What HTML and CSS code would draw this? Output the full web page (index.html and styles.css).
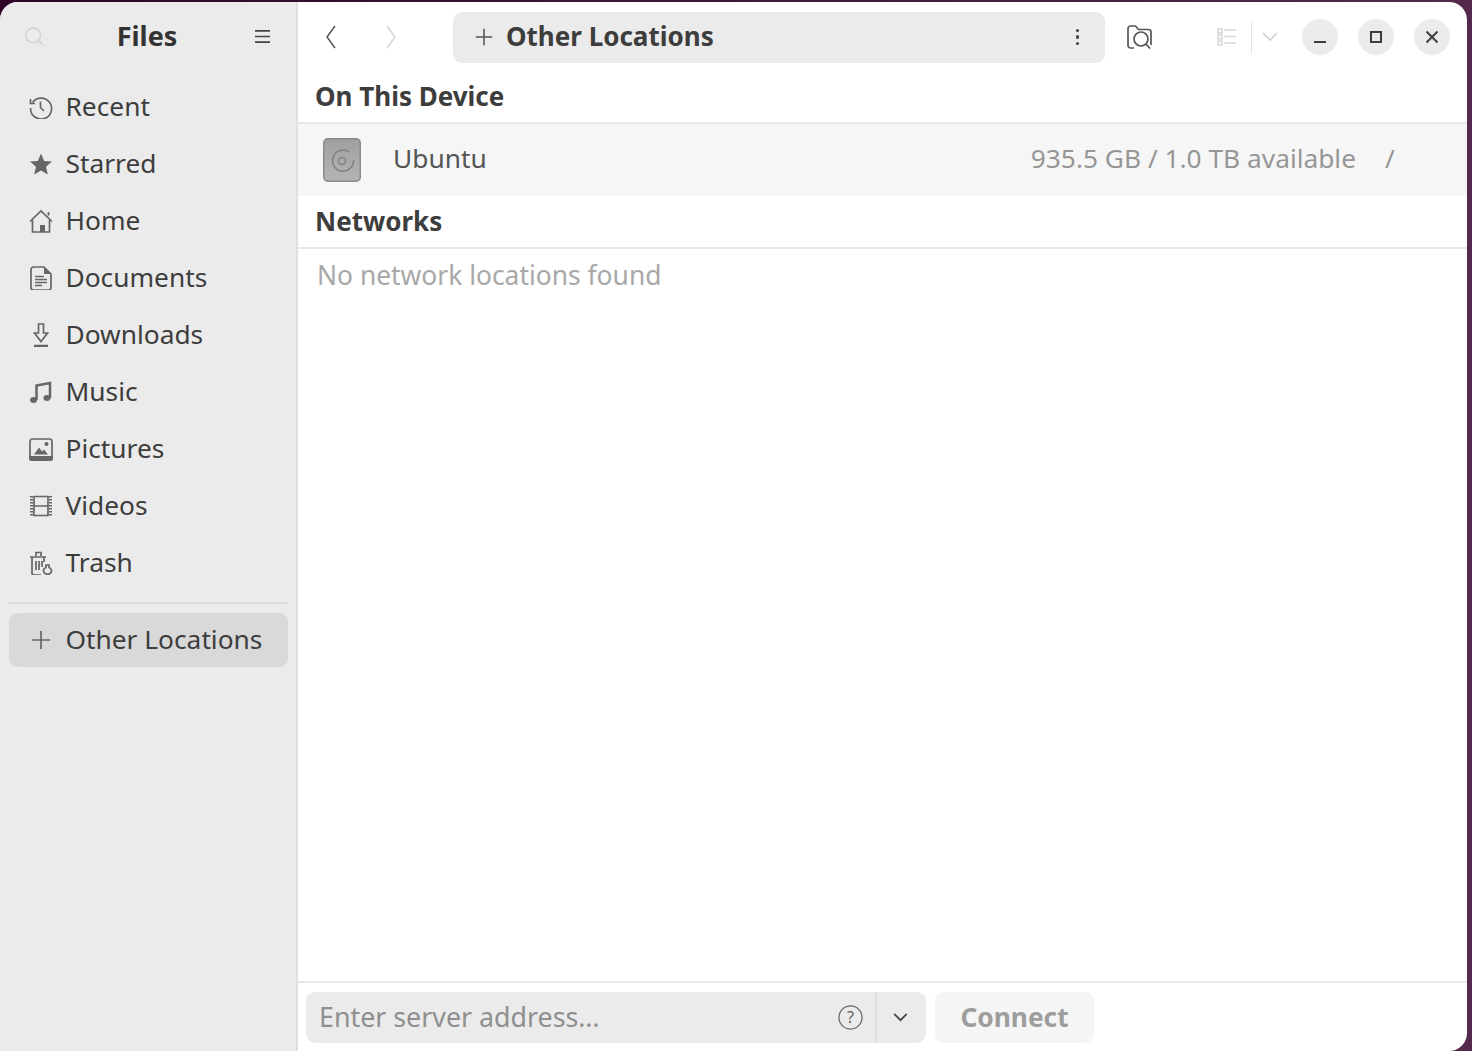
FILE: index.html
```html
<!doctype html>
<html>
<head>
<meta charset="utf-8">
<link rel="stylesheet" href="styles.css">
<title>Files</title>
</head>
<body>
<div class="window">

<aside class="sidebar">
  <div class="side-head">
    <svg class="ic search" viewBox="0 0 24 24"><circle cx="10.5" cy="10.5" r="8.5"/><path d="M17 17l5 5"/></svg>
    <h4>Files</h4>
    <svg class="ic burger" viewBox="0 0 18 16"><path d="M1 2h16M1 8h16M1 14h16"/></svg>
  </div>
  <ul class="places">
    <li><svg class="ic" viewBox="0 0 24 24"><path d="M3.5 7.5A10.5 10.5 0 1 1 1.6 13"/><path d="M1.5 4v4.500h4.500"/><path d="M11.500 6.500v6l3.500 3.500"/></svg>Recent</li>
    <li><svg class="ic fill" viewBox="0 0 24 24"><path d="M12 1.500l3.100 7.400 7.900.7-6 5.200 1.800 7.700-6.800-4.100-6.800 4.100L7 14.800l-6-5.200 7.900-.7z"/></svg>Starred</li>
    <li><svg class="ic" viewBox="0 0 24 24"><path d="M1 12.500L12 2l11 10.500"/><path d="M3.500 11v12h17V11"/><path class="solid" d="M11 23v-7h5v7z"/><path d="M19.500 3v3.500"/></svg>Home</li>
    <li><svg class="ic" viewBox="0 0 24 24"><path d="M15 1H4.500A2.500 2.500 0 0 0 2 3.500v18A2.500 2.500 0 0 0 4.500 24h15a2.500 2.500 0 0 0 2.500-2.500V8z"/><path class="solid" d="M15 1v7h7z"/><path d="M6 10.500h9M6 13.500h12M6 16.500h12M6 19.500h7"/></svg>Documents</li>
    <li><svg class="ic" viewBox="0 0 24 24"><path d="M9.500 1h5v9h4L12 18.500 5.500 10h4z"/><path class="thick" d="M5 23h14"/></svg>Downloads</li>
    <li><svg class="ic" viewBox="0 0 24 24"><path class="thick" d="M7.500 20V5.500L21 3v15"/><ellipse class="solid" cx="4.500" cy="20" rx="3.500" ry="3"/><ellipse class="solid" cx="18" cy="18" rx="3.500" ry="3"/></svg>Music</li>
    <li><svg class="ic" viewBox="0 0 24 24"><rect x="1" y="2" width="22" height="20" rx="2.500"/><path class="solid" d="M0 19h24v2.500a2.500 2.500 0 0 1-2.500 2.500h-19A2.500 2.500 0 0 1 0 21.500zM5 17.500l5-7 3 4 2-2 4 5z"/><circle class="solid" cx="17.500" cy="7" r="2"/></svg>Pictures</li>
    <li><svg class="ic" viewBox="0 0 24 24"><path d="M5 2.500h14v19H5zM5 12h14"/><path class="dash" d="M2.500 2v20M21.500 2v20"/></svg>Videos</li>
    <li><svg class="ic" viewBox="0 0 24 24"><path d="M1 6h16M7 5V1.500h5V5M3 6v16a2 2 0 0 0 2 2h7"/><path d="M15 6v5M7 10v9M10 10v9M13 10v6"/><path d="M20 14v2.500a4 3.500 0 1 1-3 0V14z"/></svg>Trash</li>
  </ul>
  <div class="side-line"></div>
  <div class="other"><svg class="ic" viewBox="0 0 24 24"><path d="M12 3v18M3 12h18"/></svg>Other Locations</div>
</aside>

<main class="content">
  <header class="toolbar">
    <div class="nav">
      <svg class="chev" viewBox="0 0 10 24"><path d="M9 1L1 12l8 11"/></svg>
      <svg class="chev off" viewBox="0 0 10 24"><path d="M1 1l8 11-8 11"/></svg>
    </div>
    <div class="pathbar">
      <svg class="ic plus" viewBox="0 0 24 24"><path d="M12 3v18M3 12h18"/></svg>
      <span class="path-name">Other Locations</span>
      <span class="dots"><i></i><i></i><i></i></span>
    </div>
    <svg class="ic lens" viewBox="0 0 26 24"><path d="M7 23H3.500A2.500 2.500 0 0 1 1 20.500V3.500A2.500 2.500 0 0 1 3.500 1h5l3 3.500h10A2.500 2.500 0 0 1 24 7v13"/><circle cx="14" cy="14" r="7"/><path d="M19 19l4 4.500"/></svg>
    <div class="view">
      <svg class="ic list" viewBox="0 0 20 18"><path d="M1 1h4v4H1zM1 7h4v4H1zM1 13h4v4H1zM7 2h12M7 8.500h12M7 15h12"/></svg>
      <span class="view-line"></span>
      <svg class="ic down" viewBox="0 0 16 10"><path d="M1 1l7 7 7-7"/></svg>
    </div>
    <div class="winbtns">
      <span class="wbtn"><svg viewBox="0 0 16 16"><path d="M2 13h12"/></svg></span>
      <span class="wbtn"><svg viewBox="0 0 16 16"><path d="M3 3h10v10H3z"/></svg></span>
      <span class="wbtn"><svg viewBox="0 0 16 16"><path d="M2.500 2.500l11 11M13.500 2.500l-11 11"/></svg></span>
    </div>
  </header>

  <div class="places-view">
    <h5>On This Device</h5>
    <div class="volume">
      <svg class="disk" viewBox="0 0 38 44">
        <defs>
          <linearGradient id="disk-fill" x1="0" y1="0" x2="0" y2="1">
            <stop offset="0" stop-color="#a0a0a0"/>
            <stop offset="1" stop-color="#b4b4b4"/>
          </linearGradient>
        </defs>
        <rect x=".75" y=".75" width="36.500" height="42.500" rx="4"/>
        <path d="M26 14a10.500 10.500 0 1 0 4.500 8"/>
        <circle cx="19" cy="23" r="3.500"/>
      </svg>
      <span class="vol-name">Ubuntu</span>
      <span class="vol-size">935.5 GB / 1.0 TB available</span>
      <span class="vol-path">/</span>
    </div>
    <h5 class="net">Networks</h5>
    <div class="none">No network locations found</div>
  </div>

  <footer class="connect">
    <div class="server">
      <span class="server-text">Enter server address…</span>
      <svg class="ic help" viewBox="0 0 26 26"><circle cx="13" cy="13" r="12"/><text x="13" y="19" text-anchor="middle">?</text></svg>
      <span class="server-arrow"><svg class="ic" viewBox="0 0 16 10"><path d="M1 1l7 7 7-7"/></svg></span>
    </div>
    <div class="connect-btn">Connect</div>
  </footer>
</main>

</div>
</body>
</html>
```

FILE: styles.css
```css
* {
    box-sizing: border-box;
}
html,
body {
    margin: 0;
    height: 100%;
    overflow: hidden;
}
body {
    background: linear-gradient(90deg, #2e0526, #54294c);
    font-family: "Noto Sans", "Open Sans", sans-serif;
    font-size: 26.3px;
    color: #3d3d3d;
    padding: 2px 5px 0 0;
}
h4,
h5 {
    margin: 0;
    font-weight: 700;
}
ul {
    list-style: none;
    margin: 0;
    padding: 0;
}

.window {
    display: flex;
    height: 1049px;
    background: #fff;
    border-radius: 18px 18px 18px 0;
    overflow: hidden;
}

/* icons */
.ic {
    fill: none;
    stroke: #666;
    stroke-width: 1.700;
    flex: none;
}
.ic .solid,
.fill {
    fill: #666;
    stroke: none;
}
.ic .thick {
    stroke-width: 2.500;
}
.ic .dash {
    stroke-width: 3;
    stroke-dasharray: 1.500 1.500;
}

/* sidebar */
.sidebar {
    width: 298px;
    flex: none;
    background: #ebebeb;
    border-right: 2px solid #e0e0e0;
}
.side-head {
    display: flex;
    align-items: center;
    height: 76px;
    padding: 0 25px 8px 24px;
}
.side-head h4 {
    flex: 1;
    text-align: center;
    font-size: 27px;
    color: #333;
    padding: 0 13px 1px 0;
}
.search {
    width: 21px;
    height: 21px;
    stroke: #d2d2d2;
    margin-right: 8px;
}
.burger {
    width: 17px;
    height: 15px;
    stroke: #444;
}
.places li,
.other {
    display: flex;
    align-items: center;
    height: 57px;
    padding: 0 0 2px 29px;
}
.places .ic,
.other .ic {
    width: 24px;
    height: 24px;
    margin: 2px 12.500px 0 0;
}
.side-line {
    height: 2px;
    margin: 11px 8px 9px 9px;
    background: #dcdcdc;
}
.other {
    height: 54px;
    margin: 0 8px 0 9px;
    padding-left: 20px;
    background: #d9d9d9;
    border-radius: 9px;
}

/* main */
.content {
    flex: 1;
    display: flex;
    flex-direction: column;
    min-width: 0;
}
.toolbar {
    display: flex;
    align-items: center;
    height: 70px;
    padding: 0 17px 0 0;
}
.nav {
    display: flex;
    width: 155px;
    padding-left: 28px;
    gap: 50px;
    flex: none;
}
.chev {
    width: 10px;
    height: 24px;
    fill: none;
    stroke: #555;
    stroke-width: 1.500;
}
.chev.off {
    stroke: #d5d5d5;
}
.pathbar {
    display: flex;
    align-items: center;
    flex: none;
    width: 652px;
    height: 51px;
    padding: 0 21px 0 20px;
    background: #ebebeb;
    border-radius: 9px;
}
.plus {
    width: 22px;
    height: 22px;
    stroke: #555;
    margin-right: 11px;
}
.path-name {
    flex: 1;
    font-weight: 700;
    font-size: 26px;
    padding-bottom: 3px;
}
.dots {
    display: flex;
    flex-direction: column;
    gap: 3px;
    margin-right: 5px;
}
.dots i {
    width: 3.500px;
    height: 3.500px;
    border-radius: 50%;
    background: #444;
}
.lens {
    width: 26px;
    height: 24px;
    margin-left: 22px;
    stroke: #555;
}
.view {
    display: flex;
    align-items: center;
    margin-left: 64px;
}
.list {
    width: 20px;
    height: 18px;
    stroke: #d8d8d8;
}
.view-line {
    width: 1px;
    height: 33px;
    background: #e4e4e4;
    margin: 0 10px 0 14px;
}
.down {
    width: 16px;
    height: 10px;
    stroke: #d0d0d0;
}
.winbtns {
    display: flex;
    gap: 20px;
    margin-left: 24px;
}
.wbtn {
    display: flex;
    align-items: center;
    justify-content: center;
    width: 36px;
    height: 36px;
    border-radius: 50%;
    background: #ebebeb;
}
.wbtn svg {
    width: 16px;
    height: 16px;
    fill: none;
    stroke: #3d3d3d;
    stroke-width: 2;
}

/* places list */
.places-view {
    flex: 1;
}
.places-view h5 {
    height: 52px;
    padding: 6px 0 0 17px;
    line-height: 36px;
    font-size: 26px;
    border-bottom: 2px solid #e8e8e8;
}
.places-view .net {
    height: 53px;
    padding-top: 7px;
}
.volume {
    display: flex;
    align-items: center;
    height: 72px;
    padding-left: 25px;
    background: #f6f6f6;
}
.disk {
    width: 38px;
    height: 44px;
    margin-right: 32px;
    flex: none;
}
.disk rect {
    fill: url(#disk-fill);
    stroke: #8a8a8a;
    stroke-width: 1.500;
}
.disk path,
.disk circle {
    fill: none;
    stroke: #808080;
    stroke-width: 1.500;
}
.vol-name {
    flex: 1;
    color: #555;
    padding-bottom: 4px;
}
.vol-size {
    color: #969696;
    padding-bottom: 4px;
}
.vol-path {
    width: 111px;
    padding: 0 0 4px 29px;
    color: #969696;
}
.none {
    padding: 8px 0 0 19px;
    color: #a8a8a8;
    font-size: 26.400px;
}

/* bottom bar */
.connect {
    display: flex;
    align-items: flex-start;
    height: 70px;
    padding: 9px 0 0 8px;
    border-top: 2px solid #e8e8e8;
}
.server {
    display: flex;
    align-items: center;
    width: 620px;
    height: 51px;
    padding-left: 13px;
    background: #ebebeb;
    border-radius: 9px;
}
.server-text {
    flex: 1;
    color: #8f8f8f;
    font-size: 26.800px;
    padding-bottom: 2px;
}
.help {
    width: 25px;
    height: 25px;
    margin-right: 12px;
    stroke: #666;
    stroke-width: 1.300;
}
.help text {
    fill: #666;
    stroke: none;
    font-size: 17px;
}
.server-arrow {
    display: flex;
    align-items: center;
    justify-content: center;
    width: 51px;
    height: 100%;
    border-left: 2px solid #dfdfdf;
    padding-right: 2px;
}
.server-arrow .ic {
    width: 15px;
    height: 9px;
    stroke: #444;
    stroke-width: 2;
}
.connect-btn {
    display: flex;
    align-items: center;
    justify-content: center;
    width: 159px;
    height: 51px;
    margin-left: 9px;
    padding-bottom: 2px;
    background: #f5f5f5;
    border-radius: 9px;
    color: #9d9d9d;
    font-weight: 700;
}
```
